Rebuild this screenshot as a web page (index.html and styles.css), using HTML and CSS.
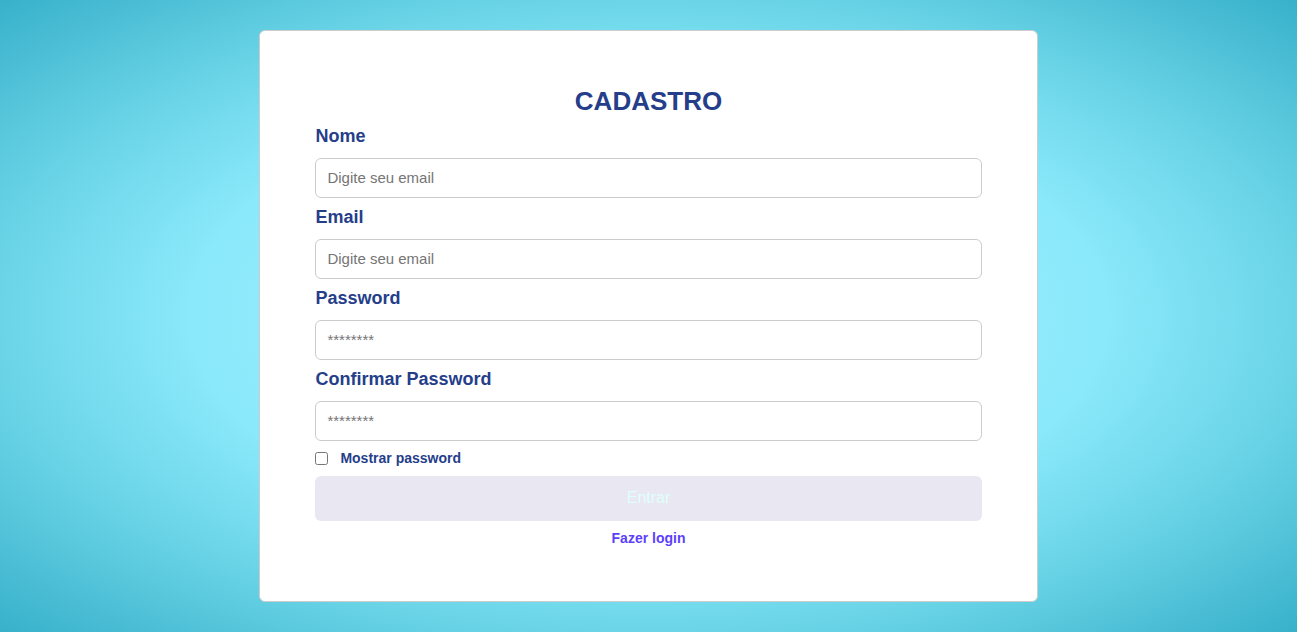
FILE: index.html
```html
<!DOCTYPE html>
<html lang="pt-BR">
<head>
  <meta charset="utf-8">
  <meta name="viewport" content="width=device-width, initial-scale=1">
  <title>Cadastro</title>
  <link rel="stylesheet" href="styles.css">
</head>
<body class="page">
  <main class="card">
    <form class="form">
      <h1 class="title">CADASTRO</h1>
      <div class="field">
        <label class="label" for="nome">Nome</label>
        <input class="input" id="nome" type="text" placeholder="Digite seu email">
      </div>
      <div class="field">
        <label class="label" for="email">Email</label>
        <input class="input" id="email" type="email" placeholder="Digite seu email">
      </div>
      <div class="field">
        <label class="label" for="password">Password</label>
        <input class="input" id="password" type="password" placeholder="********">
      </div>
      <div class="field">
        <label class="label" for="confirm">Confirmar Password</label>
        <input class="input" id="confirm" type="password" placeholder="********">
      </div>
      <div class="check">
        <input class="checkbox" id="show" type="checkbox">
        <label class="check-label" for="show">Mostrar password</label>
      </div>
      <button class="button" type="submit" disabled>Entrar</button>
      <a class="link" href="#login">Fazer login</a>
    </form>
  </main>
</body>
</html>
```
FILE: styles.css
```css
* {
  box-sizing: border-box;
}

.page {
  display: flex;
  align-items: center;
  justify-content: center;
  min-height: 100vh;
  margin: 0;
  font-family: "Liberation Sans", Arial, sans-serif;
  color: #253e8a;
  background: radial-gradient(#a6f1ff, #8ae9fb 50%, #69d3e6 72%, #44b9d1 93%, #38b1cb);
}

.card {
  width: 60%;
  padding: 55px;
  background: #fff;
  border: 1px solid #ccc;
  border-radius: 6px;
}

.form {
  display: flex;
  flex-direction: column;
  gap: 10px;
}

.field {
  display: flex;
  flex-direction: column;
  gap: 12px;
}

.title {
  margin: 0;
  font-size: 26px;
  line-height: 31px;
  text-align: center;
}

.label {
  font-size: 18px;
  font-weight: bold;
  line-height: 19px;
}

.input {
  width: 100%;
  height: 40px;
  padding: 0 11px 2px;
  font-family: inherit;
  font-size: 15px;
  color: #253e8a;
  background: #fff;
  border: 1px solid #ccc;
  border-radius: 6px;
}

.input::placeholder {
  color: #757575;
}

.check {
  display: flex;
  align-items: center;
  gap: 12px;
}

.checkbox {
  width: 13px;
  height: 13px;
  margin: 0;
}

.check-label,
.link {
  font-size: 14px;
  font-weight: bold;
  line-height: 15px;
}

.button {
  height: 45px;
  padding: 0 0 2px;
  font-family: inherit;
  font-size: 16px;
  color: #e0fffc;
  background: #e9e7f2;
  border: 0;
  border-radius: 6px;
}

.link {
  align-self: center;
  color: #5d3ffb;
  text-decoration: none;
}
```
